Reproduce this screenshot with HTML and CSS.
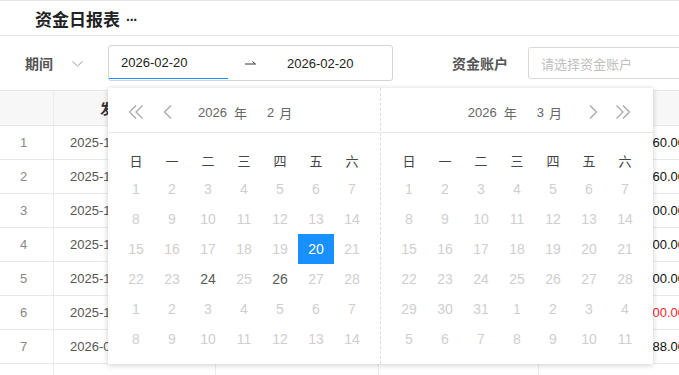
FILE: index.html
```html
<!DOCTYPE html>
<html lang="zh-CN">
<head>
<meta charset="utf-8">
<title>资金日报表</title>
<link rel="stylesheet" href="styles.css">
</head>
<body>
<div class="page">
  <header class="titlebar">
    <h1 class="title">资金日报表</h1>
    <span class="more">···</span>
  </header>

  <div class="filters">
    <span class="label">期间</span>
    <svg class="chevron" width="11" height="6" viewBox="0 0 11 6"><polyline points="0.5,0.5 5.5,5 10.5,0.5" fill="none" stroke="#9a9a9a" stroke-width="1"/></svg>
    <div class="range">
      <span class="range-start">2026-02-20</span>
      <svg class="range-sep" width="11" height="6" viewBox="0 0 11 6"><path d="M0 4H10.5M7.5 1.5L10.5 4" fill="none" stroke="#333" stroke-width="1"/></svg>
      <span class="range-end">2026-02-20</span>
    </div>
    <span class="label account-label">资金账户</span>
    <div class="account-input">请选择资金账户</div>
  </div>

  <div class="grid">
    <div class="row head">
      <div class="cell"></div>
      <div class="cell date-head">发生日期</div>
      <div class="cell">账户名称</div>
      <div class="cell">开户银行</div>
      <div class="cell"></div>
    </div>
    <div class="row"><div class="cell no">1</div><div class="cell date">2025-12-01</div><div class="cell">基本户</div><div class="cell">工商银行</div><div class="cell amt">1,260.00</div></div>
    <div class="row"><div class="cell no">2</div><div class="cell date">2025-12-03</div><div class="cell">基本户</div><div class="cell">工商银行</div><div class="cell amt">3,560.00</div></div>
    <div class="row"><div class="cell no">3</div><div class="cell date">2025-12-08</div><div class="cell">一般户</div><div class="cell">建设银行</div><div class="cell amt">5,000.00</div></div>
    <div class="row"><div class="cell no">4</div><div class="cell date">2025-12-15</div><div class="cell">一般户</div><div class="cell">建设银行</div><div class="cell amt">12,000.00</div></div>
    <div class="row"><div class="cell no">5</div><div class="cell date">2025-12-20</div><div class="cell">现金</div><div class="cell">—</div><div class="cell amt">8,000.00</div></div>
    <div class="row"><div class="cell no">6</div><div class="cell date">2025-12-28</div><div class="cell">现金</div><div class="cell">—</div><div class="cell amt neg">-2,000.00</div></div>
    <div class="row"><div class="cell no">7</div><div class="cell date">2026-01-05</div><div class="cell">基本户</div><div class="cell">工商银行</div><div class="cell amt">6,688.00</div></div>
    <div class="row"><div class="cell no"></div><div class="cell date"></div><div class="cell faint">小计</div><div class="cell faint">公司银行-大连分行</div><div class="cell amt"></div></div>
  </div>

  <div class="picker">
    <div class="panel">
      <div class="panel-head left">
        <svg class="dbl" width="16" height="14" viewBox="0 0 16 14"><path d="M8 0.5L1.5 7L8 13.5M14.5 0.5L8 7L14.5 13.5" fill="none" stroke="#a8a8a8" stroke-width="1.3"/></svg>
        <svg class="sgl" width="10" height="14" viewBox="0 0 10 14"><path d="M8 0.5L1.5 7L8 13.5" fill="none" stroke="#a8a8a8" stroke-width="1.3"/></svg>
        <span class="year">2026</span><span class="unit-y">年</span><span class="month">2</span><span class="unit-m">月</span>
      </div>
      <div class="days">
        <span class="wd">日</span><span class="wd">一</span><span class="wd">二</span><span class="wd">三</span><span class="wd">四</span><span class="wd">五</span><span class="wd">六</span>
        <span class="d">1</span><span class="d">2</span><span class="d">3</span><span class="d">4</span><span class="d">5</span><span class="d">6</span><span class="d">7</span>
        <span class="d">8</span><span class="d">9</span><span class="d">10</span><span class="d">11</span><span class="d">12</span><span class="d">13</span><span class="d">14</span>
        <span class="d">15</span><span class="d">16</span><span class="d">17</span><span class="d">18</span><span class="d">19</span><span class="d sel">20</span><span class="d">21</span>
        <span class="d">22</span><span class="d">23</span><span class="d on">24</span><span class="d">25</span><span class="d on">26</span><span class="d">27</span><span class="d">28</span>
        <span class="d">1</span><span class="d">2</span><span class="d">3</span><span class="d">4</span><span class="d">5</span><span class="d">6</span><span class="d">7</span>
        <span class="d">8</span><span class="d">9</span><span class="d">10</span><span class="d">11</span><span class="d">12</span><span class="d">13</span><span class="d">14</span>
      </div>
    </div>
    <div class="panel right-panel">
      <div class="panel-head right">
        <span class="year">2026</span><span class="unit-y">年</span><span class="month">3</span><span class="unit-m">月</span>
        <svg class="sgl-r" width="10" height="14" viewBox="0 0 10 14"><path d="M2 0.5L8.5 7L2 13.5" fill="none" stroke="#a8a8a8" stroke-width="1.3"/></svg>
        <svg class="dbl-r" width="16" height="14" viewBox="0 0 16 14"><path d="M1.5 0.5L8 7L1.5 13.5M8 0.5L14.5 7L8 13.5" fill="none" stroke="#a8a8a8" stroke-width="1.3"/></svg>
      </div>
      <div class="days">
        <span class="wd">日</span><span class="wd">一</span><span class="wd">二</span><span class="wd">三</span><span class="wd">四</span><span class="wd">五</span><span class="wd">六</span>
        <span class="d">1</span><span class="d">2</span><span class="d">3</span><span class="d">4</span><span class="d">5</span><span class="d">6</span><span class="d">7</span>
        <span class="d">8</span><span class="d">9</span><span class="d">10</span><span class="d">11</span><span class="d">12</span><span class="d">13</span><span class="d">14</span>
        <span class="d">15</span><span class="d">16</span><span class="d">17</span><span class="d">18</span><span class="d">19</span><span class="d">20</span><span class="d">21</span>
        <span class="d">22</span><span class="d">23</span><span class="d">24</span><span class="d">25</span><span class="d">26</span><span class="d">27</span><span class="d">28</span>
        <span class="d">29</span><span class="d">30</span><span class="d">31</span><span class="d">1</span><span class="d">2</span><span class="d">3</span><span class="d">4</span>
        <span class="d">5</span><span class="d">6</span><span class="d">7</span><span class="d">8</span><span class="d">9</span><span class="d">10</span><span class="d">11</span>
      </div>
    </div>
  </div>
</div>
</body>
</html>
```
FILE: styles.css
```css
html, body {
  margin: 0;
  padding: 0;
  overflow: hidden;
  background: #fff;
}
body {
  font-family: "Liberation Sans", "Noto Sans CJK SC", sans-serif;
  color: #333;
}
.page {
  position: relative;
  width: 679px;
  height: 375px;
  overflow: hidden;
}

/* title bar */
.titlebar {
  height: 36px;
  box-sizing: border-box;
  border-top: 1px solid #e6e6e6;
  border-bottom: 1px solid #e6e6e6;
  display: flex;
  align-items: center;
  padding-left: 35px;
}
.title {
  margin: 0;
  font-size: 17px;
  font-weight: bold;
  color: #222;
  font-family: "Noto Sans CJK SC", sans-serif;
  line-height: 1;
}
.more {
  margin-left: 6px;
  font-size: 14px;
  font-weight: bold;
  letter-spacing: -1px;
  color: #222;
  position: relative;
  top: 2px;
}

/* filters */
.filters {
  height: 54px;
  display: flex;
  align-items: center;
  padding-left: 25px;
}
.filters > * {
  flex-shrink: 0;
  white-space: nowrap;
}
.label {
  font-family: "Noto Sans CJK SC", sans-serif;
  font-size: 14px;
  font-weight: bold;
  color: #555;
}
.chevron {
  margin-left: 19px;
  margin-top: 1px;
}
.range {
  margin-left: 25px;
  width: 285px;
  height: 36px;
  box-sizing: border-box;
  border: 1px solid #d4d4d4;
  border-radius: 3px;
  display: flex;
  align-items: stretch;
  font-size: 13px;
  color: #222;
}
.range-start {
  width: 119px;
  box-sizing: border-box;
  padding-left: 12px;
  display: flex;
  align-items: center;
  border-bottom: 1px solid #1890ff;
  margin-bottom: 1px;
}
.range-sep {
  align-self: center;
  margin-left: 17px;
}
.range-end {
  margin-left: 31px;
  display: flex;
  align-items: center;
}
.account-label {
  margin-left: 59px;
}
.account-input {
  margin-left: 20px;
  width: 220px;
  height: 32px;
  box-sizing: border-box;
  border: 1px solid #d9d9d9;
  border-radius: 3px;
  padding-left: 12px;
  display: flex;
  align-items: center;
  font-family: "Noto Sans CJK SC", sans-serif;
  font-size: 13px;
  color: #c0c0c0;
}

/* table */
.grid {
  width: 700px;
  border-top: 1px solid #e8e8e8;
}
.row {
  display: grid;
  grid-template-columns: 54px 162px 163px 160px 161px;
  height: 34px;
  box-sizing: border-box;
  border-bottom: 1px solid #e8e8e8;
  font-size: 13px;
}
.row.head {
  height: 35px;
  background: #f7f7f7;
}
.cell {
  border-right: 1px solid #ececec;
  display: flex;
  align-items: center;
  padding-left: 16px;
  white-space: nowrap;
  overflow: hidden;
}
.date-head {
  padding-left: 46px;
  font-family: "Noto Sans CJK SC", sans-serif;
  font-weight: bold;
  font-size: 14px;
  color: #333;
}
.no {
  padding-left: 0;
  padding-right: 6px;
  justify-content: center;
  color: #888;
}
.date {
  color: #555;
}
.faint {
  color: #999;
  font-family: "Noto Sans CJK SC", sans-serif;
}
.amt {
  justify-content: flex-end;
  padding-left: 0;
  padding-right: 14px;
  color: #111;
}
.amt.neg {
  color: #f5222d;
}

/* date picker dropdown */
.picker {
  position: absolute;
  left: 108px;
  top: 88px;
  width: 545px;
  height: 276px;
  background: #fff;
  box-shadow: 0 1px 6px rgba(0, 0, 0, 0.2);
  display: flex;
}
.panel {
  width: 272px;
}
.right-panel {
  width: 273px;
  box-sizing: border-box;
  border-left: 1px dashed #dcdcdc;
}
.panel-head {
  height: 45px;
  box-sizing: border-box;
  padding-top: 4px;
  border-bottom: 1px solid #e8e8e8;
  display: flex;
  align-items: center;
  font-size: 13px;
  color: #666;
  white-space: nowrap;
}
.panel-head > * {
  flex-shrink: 0;
}
.panel-head.left {
  padding-left: 20px;
}
.panel-head.right {
  justify-content: flex-end;
  padding-right: 22px;
}
.sgl {
  margin-left: 19px;
}
.left .year {
  margin-left: 25px;
}
.unit-y {
  margin-left: 7px;
  font-family: "Noto Sans CJK SC", sans-serif;
}
.month {
  margin-left: 20px;
}
.unit-m {
  margin-left: 5px;
  font-family: "Noto Sans CJK SC", sans-serif;
}
.sgl-r {
  margin-left: 26px;
}
.dbl-r {
  margin-left: 17px;
}
.days {
  display: grid;
  grid-template-columns: repeat(7, 36px);
  grid-template-rows: 41px;
  grid-auto-rows: 30px;
  padding: 0 10px;
}
.wd {
  height: 28px;
  margin-top: 13px;
  display: flex;
  align-items: center;
  justify-content: center;
  font-family: "Noto Sans CJK SC", sans-serif;
  font-size: 13px;
  color: #444;
}
.d {
  display: flex;
  align-items: center;
  justify-content: center;
  font-size: 14px;
  color: #cfcfcf;
}
.d.on {
  color: #5a5a5a;
}
.d.sel {
  background: #1890ff;
  color: #fff;
}
```
